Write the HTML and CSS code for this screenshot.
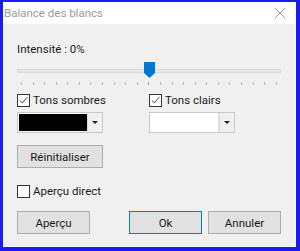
FILE: index.html
```html
<!DOCTYPE html>
<html lang="fr">
<head>
<meta charset="utf-8">
<link rel="stylesheet" href="styles.css">
</head>
<body>
<div class="window">
  <div class="titlebar">
    <span class="title">Balance des blancs</span>
    <svg class="close" width="12" height="12" viewBox="0 0 12 12"><path d="M1 1L11 11M11 1L1 11" stroke="#9a9a9a" stroke-width="1" fill="none"/></svg>
  </div>
  <div class="content">
    <div class="label">Intensité : 0%</div>
    <div class="slider">
      <div class="track"></div>
      <svg class="thumb" width="11" height="16" viewBox="0 0 11 16"><path d="M0 0H11V11L5.5 16L0 11Z" fill="#0078d7"/></svg>
      <div class="ticks">
        <i></i><i></i><i></i><i></i><i></i><i></i><i></i><i></i><i></i><i></i><i></i><i class="mid"></i><i></i><i></i><i></i><i></i><i></i><i></i><i></i><i></i><i></i><i></i><i></i>
      </div>
    </div>
    <div class="tones">
      <div class="tone">
        <label class="check"><span class="box"><svg width="12" height="12" viewBox="0 0 12 12"><path d="M2 6.5L4.8 9.2L10.2 2.8" stroke="#333" stroke-width="1" fill="none"/></svg></span>Tons sombres</label>
        <div class="combo"><span class="swatch dark"></span><span class="arrow"><svg width="6" height="3" viewBox="0 0 6 3"><path d="M0 0H6L3 3Z" fill="#222"/></svg></span></div>
      </div>
      <div class="tone">
        <label class="check"><span class="box"><svg width="12" height="12" viewBox="0 0 12 12"><path d="M2 6.5L4.8 9.2L10.2 2.8" stroke="#333" stroke-width="1" fill="none"/></svg></span>Tons clairs</label>
        <div class="combo"><span class="swatch light"></span><span class="arrow"><svg width="6" height="3" viewBox="0 0 6 3"><path d="M0 0H6L3 3Z" fill="#222"/></svg></span></div>
      </div>
    </div>
    <button class="btn reset">Réinitialiser</button>
    <label class="check direct"><span class="box"></span>Aperçu direct</label>
    <div class="actions">
      <button class="btn">Aperçu</button>
      <div class="right">
        <button class="btn primary">Ok</button>
        <button class="btn">Annuler</button>
      </div>
    </div>
  </div>
</div>
</body>
</html>
```
FILE: styles.css
```css
* { box-sizing: border-box; }
html, body { margin: 0; padding: 0; }
body {
  width: 300px;
  height: 251px;
  overflow: hidden;
  font-family: Roboto, "Noto Sans", sans-serif;
  font-size: 11.5px;
  color: #1a1a1a;
}
.window {
  width: 300px;
  height: 251px;
  border-style: solid;
  border-color: #1c1cf0;
  border-width: 2px 4px 4px 3px;
  background: #f0f0f0;
  display: flex;
  flex-direction: column;
}
.titlebar {
  height: 22px;
  background: #fff;
  display: flex;
  align-items: center;
  justify-content: space-between;
  padding: 0 10px 0 1px;
  flex: none;
}
.title {
  color: #9a9a9a;
  font-size: 11.5px;
}
.close { display: block; }
.content {
  flex: 1;
  padding: 17px 14px 0 14px;
  display: flex;
  flex-direction: column;
  border-right: 1px solid #fafafa;
  border-bottom: 1px solid #fafafa;
}
.label { line-height: 16px; }
.slider {
  position: relative;
  margin-top: 7px;
  height: 26px;
}
.track {
  margin-top: 5px;
  height: 4px;
  background: #e7e7e7;
  border: 1px solid #dadada;
}
.thumb {
  position: absolute;
  left: 127px;
  top: -2px;
}
.ticks {
  display: flex;
  justify-content: space-between;
  padding: 0 4px;
  margin-top: 9px;
}
.ticks i {
  width: 1px;
  height: 3px;
  background: #b5b5b5;
}
.ticks i.mid { background: #e08080; }
.tones {
  display: flex;
  margin-top: 2px;
}
.tone {
  width: 133px;
  display: flex;
  flex-direction: column;
}
.check {
  display: flex;
  align-items: center;
  height: 16px;
  gap: 3px;
}
.box {
  width: 13px;
  height: 13px;
  border: 1px solid #333;
  background: #fff;
  display: flex;
  align-items: center;
  justify-content: center;
}
.box svg { display: block; }
.combo {
  margin-top: 4px;
  width: 86px;
  height: 21px;
  border: 1px solid #c8c8c8;
  display: flex;
  background: #fff;
}
.swatch { flex: 1; }
.swatch.dark { background: #000; border: 1px solid #fff; border-right: none; }
.swatch.light { background: #fff; border-right: 1px solid #e0e0e0; }
.arrow {
  width: 15px;
  background: #f0f0f0;
  display: flex;
  align-items: center;
  justify-content: center;
  border-left: 1px solid #dcdcdc;
}
.arrow svg { display: block; }
.btn {
  font-family: inherit;
  font-size: 11.5px;
  color: #1a1a1a;
  background: #e1e1e1;
  border: 1px solid #adadad;
  width: 73px;
  height: 23px;
  padding: 0;
}
.reset {
  width: 86px;
  margin-top: 12px;
}
.direct { margin-top: 15px; }
.actions {
  display: flex;
  justify-content: space-between;
  margin-top: 12px;
}
.right { display: flex; gap: 6px; }
.primary { border-color: #0078d7; }
```
